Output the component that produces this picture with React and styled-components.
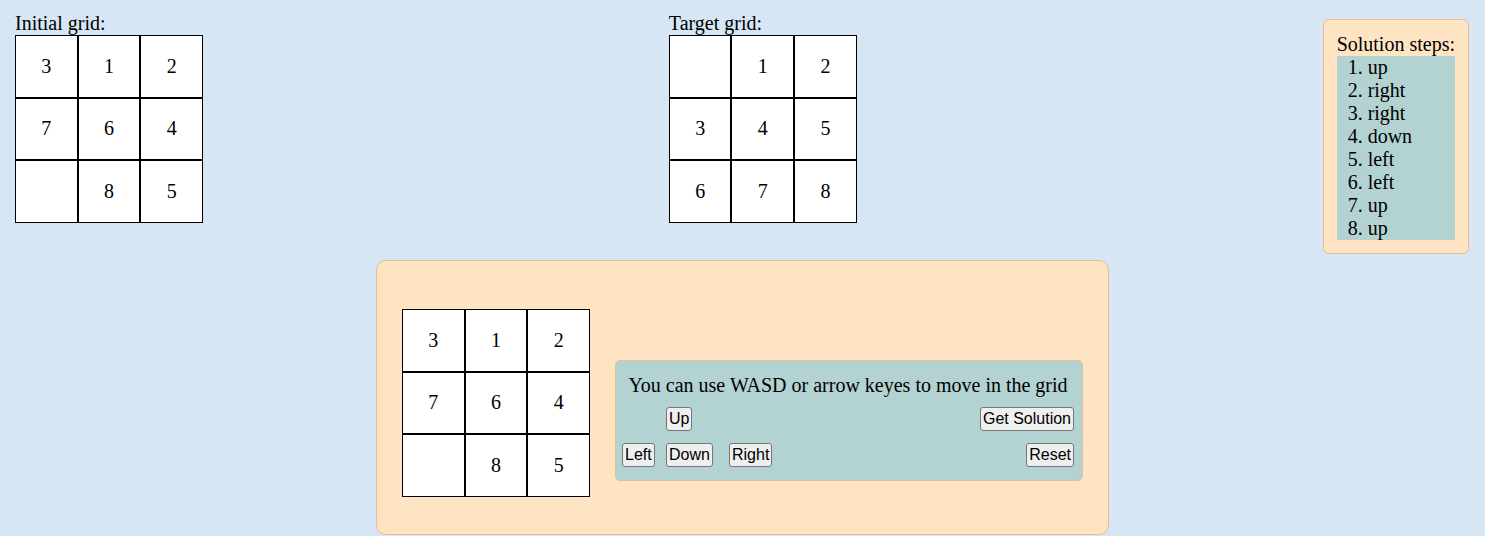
import React from 'react';
import styled, { createGlobalStyle } from 'styled-components';

const GlobalStyle = createGlobalStyle`
  body {
    margin: 0;
    background: #d6e6f4;
    font-family: "Liberation Serif", "Times New Roman", serif;
    font-size: 20px;
    color: #000;
  }
`;

const Page = styled.div`
  min-height: 536px;
`;

const TopRow = styled.div`
  display: flex;
  justify-content: space-between;
  align-items: flex-start;
  padding: 12px 16px 0 15px;
`;

const GridBlock = styled.div`
  display: flex;
  flex-direction: column;
`;

const GridTitle = styled.div`
  line-height: 23px;
`;

const Board = styled.div`
  display: grid;
  grid-template-columns: repeat(3, 1fr);
  grid-auto-rows: 62.67px;
  width: 188px;
  background: #fff;
`;

const Cell = styled.div`
  box-sizing: border-box;
  border: 1px solid #000;
  display: flex;
  align-items: center;
  justify-content: center;
  font-size: 20px;
`;

const StepsPanel = styled.div`
  margin-top: 7px;
  padding: 13px;
  background: #ffe4c4;
  border: 1px solid #e3c094;
  border-radius: 6px;
`;

const StepsTitle = styled.div`
  line-height: 23px;
`;

const StepsList = styled.ol`
  margin: 0;
  padding: 0 0 0 31px;
  background: #b3d3d2;
  line-height: 23px;
`;

const MainPanel = styled.div`
  box-sizing: border-box;
  width: 733px;
  margin: 6px auto 0;
  padding: 48px 25px 37px;
  display: flex;
  align-items: flex-start;
  gap: 25px;
  background: #ffe4c4;
  border: 1px solid #e3c094;
  border-radius: 10px;
`;

const Controls = styled.div`
  flex: 1;
  margin-top: 51px;
  padding: 13px 8px 13px 6px;
  background: #b3d3d2;
  border: 1px solid #e3c094;
  border-radius: 5px;
`;

const Hint = styled.div`
  text-align: center;
  line-height: 23px;
  margin-bottom: 10px;
`;

const ButtonGrid = styled.div`
  display: grid;
  grid-template-columns: 44px 63px 1fr auto;
  row-gap: 12px;
  justify-items: start;
`;

const Btn = styled.button`
  grid-column: ${p => p.col};
  grid-row: ${p => p.row};
  justify-self: ${p => (p.end ? 'end' : 'start')};
  font-family: "Liberation Sans", Arial, sans-serif;
  font-size: 16px;
  padding: 2px 2px;
  background: #efefef;
  color: #000;
  border: 1px solid #767676;
  border-radius: 3px;
  cursor: pointer;
`;

function Grid({ cells }) {
  return (
    <Board>
      {cells.map((c, i) => <Cell key={i}>{c}</Cell>)}
    </Board>
  );
}

const initial = [3, 1, 2, 7, 6, 4, '', 8, 5];
const target = ['', 1, 2, 3, 4, 5, 6, 7, 8];
const steps = ['up', 'right', 'right', 'down', 'left', 'left', 'up', 'up'];

export default function App() {
  return (
    <Page>
      <GlobalStyle />
      <TopRow>
        <GridBlock>
          <GridTitle>Initial grid:</GridTitle>
          <Grid cells={initial} />
        </GridBlock>
        <GridBlock>
          <GridTitle>Target grid:</GridTitle>
          <Grid cells={target} />
        </GridBlock>
        <StepsPanel>
          <StepsTitle>Solution steps:</StepsTitle>
          <StepsList>
            {steps.map((s, i) => <li key={i}>{s}</li>)}
          </StepsList>
        </StepsPanel>
      </TopRow>
      <MainPanel>
        <Grid cells={initial} />
        <Controls>
          <Hint>You can use WASD or arrow keyes to move in the grid</Hint>
          <ButtonGrid>
            <Btn col={2} row={1}>Up</Btn>
            <Btn col={4} row={1} end>Get Solution</Btn>
            <Btn col={1} row={2}>Left</Btn>
            <Btn col={2} row={2}>Down</Btn>
            <Btn col={3} row={2}>Right</Btn>
            <Btn col={4} row={2} end>Reset</Btn>
          </ButtonGrid>
        </Controls>
      </MainPanel>
    </Page>
  );
}
